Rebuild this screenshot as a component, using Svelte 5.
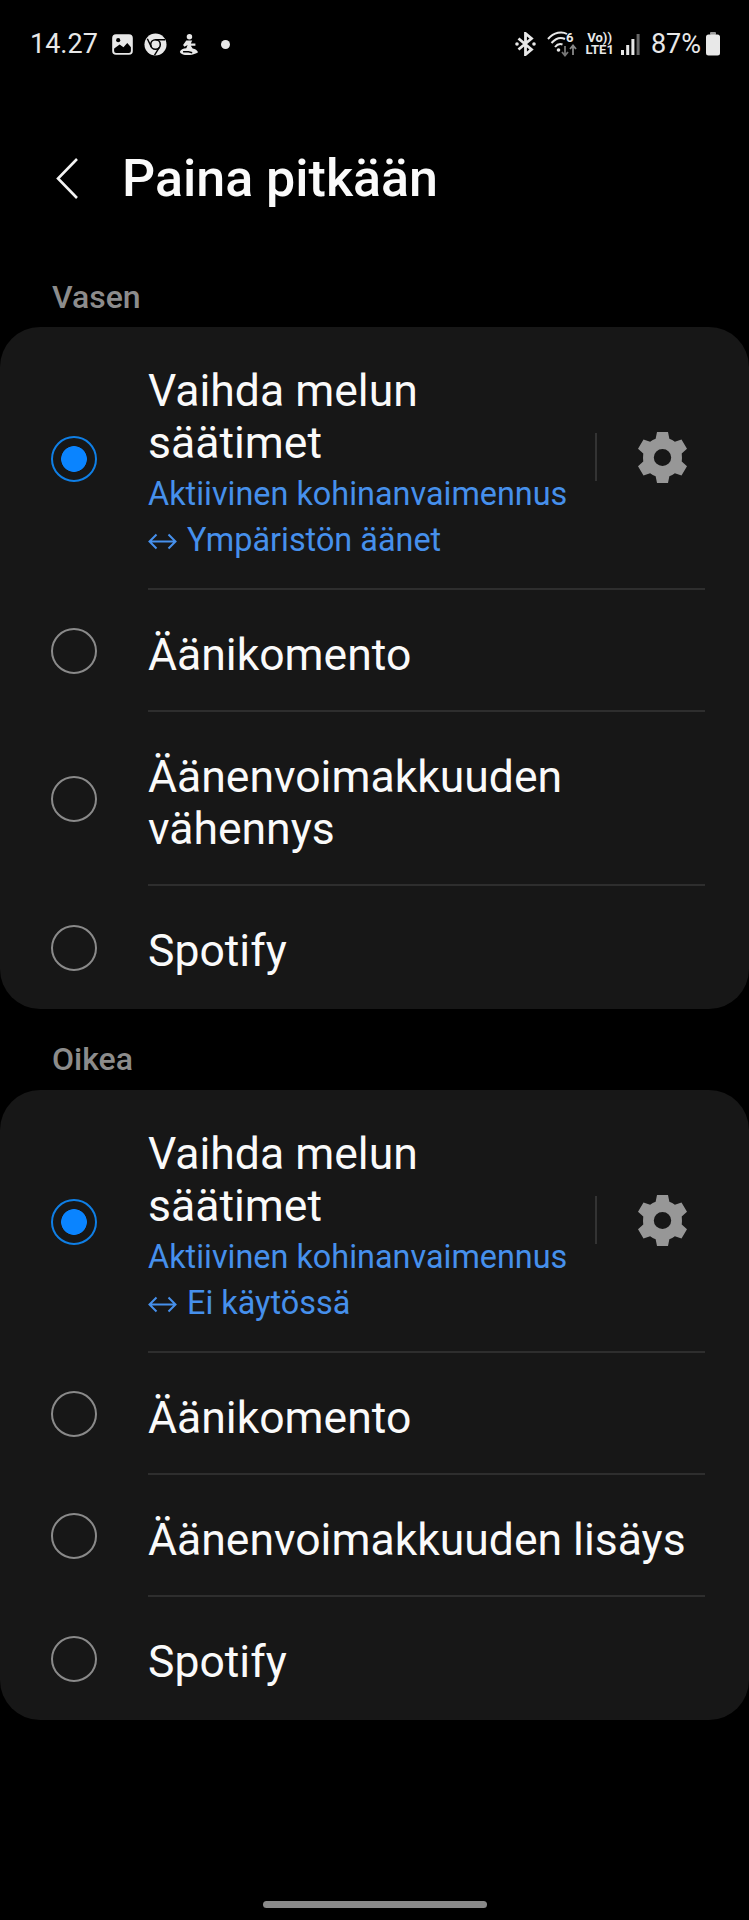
<script>
	const sections = [
		{
			title: 'Vasen',
			options: [
				{ label: 'Vaihda melun\nsäätimet', selected: true, sub: 'Aktiivinen kohinanvaimennus', sub2: 'Ympäristön äänet' },
				{ label: 'Äänikomento' },
				{ label: 'Äänenvoimakkuuden\nvähennys' },
				{ label: 'Spotify' }
			]
		},
		{
			title: 'Oikea',
			options: [
				{ label: 'Vaihda melun\nsäätimet', selected: true, sub: 'Aktiivinen kohinanvaimennus', sub2: 'Ei käytössä' },
				{ label: 'Äänikomento' },
				{ label: 'Äänenvoimakkuuden lisäys' },
				{ label: 'Spotify' }
			]
		}
	];
</script>

<div class="page">
	<div class="status">
		<div class="status-left">
			<span class="time">14.27</span>
			<svg class="ic" width="21" height="21" viewBox="0 0 22 22">
				<rect x="1.2" y="1.2" width="19.6" height="19.6" rx="3" fill="none" stroke="#e8e8e8" stroke-width="2" />
				<path d="M1.2 4 Q1.2 1.2 4 1.2 H18 Q20.8 1.2 20.8 4 V15 L16 9.5 L12 14 L8 11 L1.2 16Z" fill="#e8e8e8" />
				<circle cx="6.5" cy="6.5" r="2.2" fill="#000" />
			</svg>
			<svg class="ic chrome" width="23" height="23" viewBox="0 0 24 24">
				<circle cx="12" cy="12" r="11.5" fill="#e8e8e8" />
				<circle cx="12" cy="12" r="5" fill="none" stroke="#000" stroke-width="1.6" />
				<path d="M12 7 H22 M7.6 14.5 L3.5 6 M16 15 L11 23" stroke="#000" stroke-width="1.5" fill="none" />
			</svg>
			<svg class="ic person" width="20" height="21" viewBox="0 0 21 23">
				<circle cx="11" cy="3" r="3" fill="#e8e8e8" />
				<path d="M7.5 7 H14 L12.5 10.5 H17.5 V13 H12.5 L14.5 16 C17.5 16.5 19.5 18 20.5 20 C17 22.5 11 23.5 6 23 C3 22.5 1 21.5 0.5 19.5 C1.5 17 4 15.5 7.5 15.5 L9 12 L5.5 14 L4 12Z" fill="#e8e8e8" />
				<path d="M4 19.5 H10 L14 20.5" stroke="#000" stroke-width="1.5" fill="none" />
			</svg>
			<span class="dot"></span>
		</div>
		<div class="status-right">
			<svg width="21" height="24" viewBox="0 0 21 24">
				<path d="M3.5 6.5 L16.5 17.5 L10.5 22.5 V1.5 L16.5 6.5 L3.5 17.5" fill="none" stroke="#e8e8e8" stroke-width="2.8" />
				<circle cx="2" cy="12" r="1.8" fill="#e8e8e8" />
				<circle cx="19" cy="12" r="1.8" fill="#e8e8e8" />
			</svg>
			<svg class="wifi" width="30" height="30" viewBox="0 -2 30 30">
				<path d="M1 8 C7 1 15 0 20 3 M4.5 12 C9 7 14 6 18 8 M8 16 C10 13.5 13 12.5 15.5 13.5" fill="none" stroke="#e8e8e8" stroke-width="2" />
				<circle cx="11.5" cy="19" r="1.8" fill="#e8e8e8" />
				<text x="19" y="11" class="six">6</text>
				<path d="M18 15 V24 M15 21 L18 24.5 L21 21" stroke="#777" stroke-width="1.8" fill="none" />
				<path d="M26 24 V15 M23 18 L26 14.5 L29 18" stroke="#888" stroke-width="1.8" fill="none" />
			</svg>
			<div class="volte"><span>Vo))</span><span>LTE1</span></div>
			<svg class="signal" width="19" height="21" viewBox="0 0 19 21">
				<rect x="0" y="16" width="3" height="5" fill="#e8e8e8" />
				<rect x="5.2" y="11" width="3" height="10" fill="#e8e8e8" />
				<rect x="10.4" y="5" width="3" height="16" fill="#e8e8e8" />
				<rect x="15.6" y="0" width="3" height="21" fill="#666" />
			</svg>
			<span class="pct">87%</span>
			<svg width="16" height="24" viewBox="0 0 16 24">
				<rect x="5" y="0" width="6" height="3" rx="1" fill="#999" />
				<path d="M1 5 Q1 2.5 3.5 2.5 H12.5 Q15 2.5 15 5 V21 Q15 23.5 12.5 23.5 H3.5 Q1 23.5 1 21Z" fill="#e8e8e8" />
			</svg>
		</div>
	</div>

	<div class="header">
		<svg class="back" width="22" height="41" viewBox="0 0 22 41">
			<path d="M21 1 L2 20.5 L21 40" fill="none" stroke="#f4f4f4" stroke-width="2.6" />
		</svg>
		<h1>Paina pitkään</h1>
	</div>

	{#each sections as section}
		<h2>{section.title}</h2>
		<div class="card">
			{#each section.options as opt}
				<div class="row">
					<span class="radio" class:on={opt.selected}></span>
					<div class="body">
						<div class="inner" class:rich={opt.sub}>
							<div class="text">
								<div class="label">{opt.label}</div>
								{#if opt.sub}
									<div class="sub first">{opt.sub}</div>
									<div class="sub">
										<svg class="arrows" width="29" height="17" viewBox="0 0 29 17">
											<path d="M1.5 8.5 H27.5 M8.5 1.5 L1.5 8.5 L8.5 15.5 M20.5 1.5 L27.5 8.5 L20.5 15.5" fill="none" stroke="#4690ec" stroke-width="2" />
										</svg>{opt.sub2}
									</div>
								{/if}
							</div>
							{#if opt.selected}
								<span class="sep"></span>
								<svg class="gear" width="49" height="51" viewBox="1.3 0.6 21.4 22.8" preserveAspectRatio="none">
									<path fill-rule="evenodd" fill="#979797" d="M9.6 0.6 H14.4 L15 3.6 Q16.3 4.1 17.4 5 L20.3 4 L22.7 8.1 L20.4 10.2 Q20.6 12 20.4 13.8 L22.7 15.9 L20.3 20 L17.4 19 Q16.3 19.9 15 20.4 L14.4 23.4 H9.6 L9 20.4 Q7.7 19.9 6.6 19 L3.7 20 L1.3 15.9 L3.6 13.8 Q3.4 12 3.6 10.2 L1.3 8.1 L3.7 4 L6.6 5 Q7.7 4.1 9 3.6Z M12 8.2 A3.8 3.8 0 1 0 12 15.8 A3.8 3.8 0 1 0 12 8.2Z" />
								</svg>
							{/if}
						</div>
					</div>
				</div>
			{/each}
		</div>
	{/each}

	<div class="home"></div>
</div>

<style>
	:global(body) {
		margin: 0;
		background: #000;
	}

	.page {
		width: 749px;
		height: 1920px;
		background: #000;
		font-family: Roboto, sans-serif;
		color: #fafafa;
		display: flex;
		flex-direction: column;
		overflow: hidden;
	}

	.status {
		display: flex;
		justify-content: space-between;
		align-items: center;
		height: 44px;
		margin-top: 22px;
		padding: 0 28px 0 30px;
	}

	.status-left,
	.status-right {
		display: flex;
		align-items: center;
	}

	.time {
		font-size: 27px;
		color: #e8e8e8;
		margin-right: 14px;
	}

	.ic {
		margin-right: 11px;
	}

	.ic.person {
		margin-left: 1px;
	}

	.dot {
		width: 9px;
		height: 9px;
		border-radius: 50%;
		background: #e8e8e8;
		margin-left: 11px;
	}

	.wifi {
		margin-left: 11px;
	}

	.six {
		font: 700 13px Roboto, sans-serif;
		fill: #e8e8e8;
	}

	.volte {
		display: flex;
		flex-direction: column;
		font: 700 13px/12px Roboto, sans-serif;
		color: #e8e8e8;
		margin-left: 8px;
		text-align: center;
	}

	.signal {
		margin-left: 7px;
	}

	.pct {
		font-size: 27px;
		color: #e8e8e8;
		margin: 0 4px 0 11px;
	}

	.header {
		display: flex;
		align-items: center;
		height: 64px;
		margin-top: 80px;
		padding-left: 56px;
	}

	.back {
		flex: none;
	}

	h1 {
		margin: 0 0 0 44px;
		font-size: 52px;
		font-weight: 500;
		color: #fafafa;
	}

	h2 {
		margin: 0 0 10px;
		padding-left: 52px;
		font-size: 32px;
		font-weight: 500;
		line-height: 40px;
		color: #8c8c8c;
	}

	.header + h2 {
		margin-top: 67px;
	}

	.card + h2 {
		margin: 30px 0 11px;
	}

	.card {
		background: #171717;
		border-radius: 40px;
	}

	.row {
		display: flex;
		align-items: center;
	}

	.radio {
		flex: none;
		box-sizing: border-box;
		width: 46px;
		height: 46px;
		margin: 0 51px;
		border: 2.5px solid #8a8a8a;
		border-radius: 50%;
	}

	.radio.on {
		border-color: #0f7fe6;
		background: radial-gradient(circle, #0a84ff 0 12.5px, transparent 13.2px);
	}

	.body {
		flex: 1;
		margin-right: 44px;
		border-bottom: 2px solid #2e2e2e;
	}

	.row:last-child .body {
		border-bottom: none;
	}

	.inner {
		display: flex;
		align-items: center;
		padding: 39px 0 29px;
	}

	.inner.rich {
		padding: 38px 0 25px;
	}

	.row:last-child .inner {
		padding: 39px 0 32px;
	}

	.text {
		flex: 1;
		min-width: 0;
	}

	.label {
		font-size: 44.5px;
		line-height: 52px;
		white-space: pre-line;
		color: #fafafa;
	}

	.sub {
		font-size: 32.4px;
		line-height: 46px;
		color: #4690ec;
	}

	.sub.first {
		margin-top: 2px;
	}

	.arrows {
		margin-right: 10px;
		vertical-align: 1px;
	}

	.sep {
		flex: none;
		width: 2px;
		height: 48px;
		background: #333;
		margin: 0 41px 14px 0;
	}

	.gear {
		flex: none;
		margin: 0 18px 14px 0;
	}

	.home {
		width: 224px;
		height: 7px;
		border-radius: 4px;
		background: #8a8a8a;
		margin: auto auto 12px;
	}
</style>
